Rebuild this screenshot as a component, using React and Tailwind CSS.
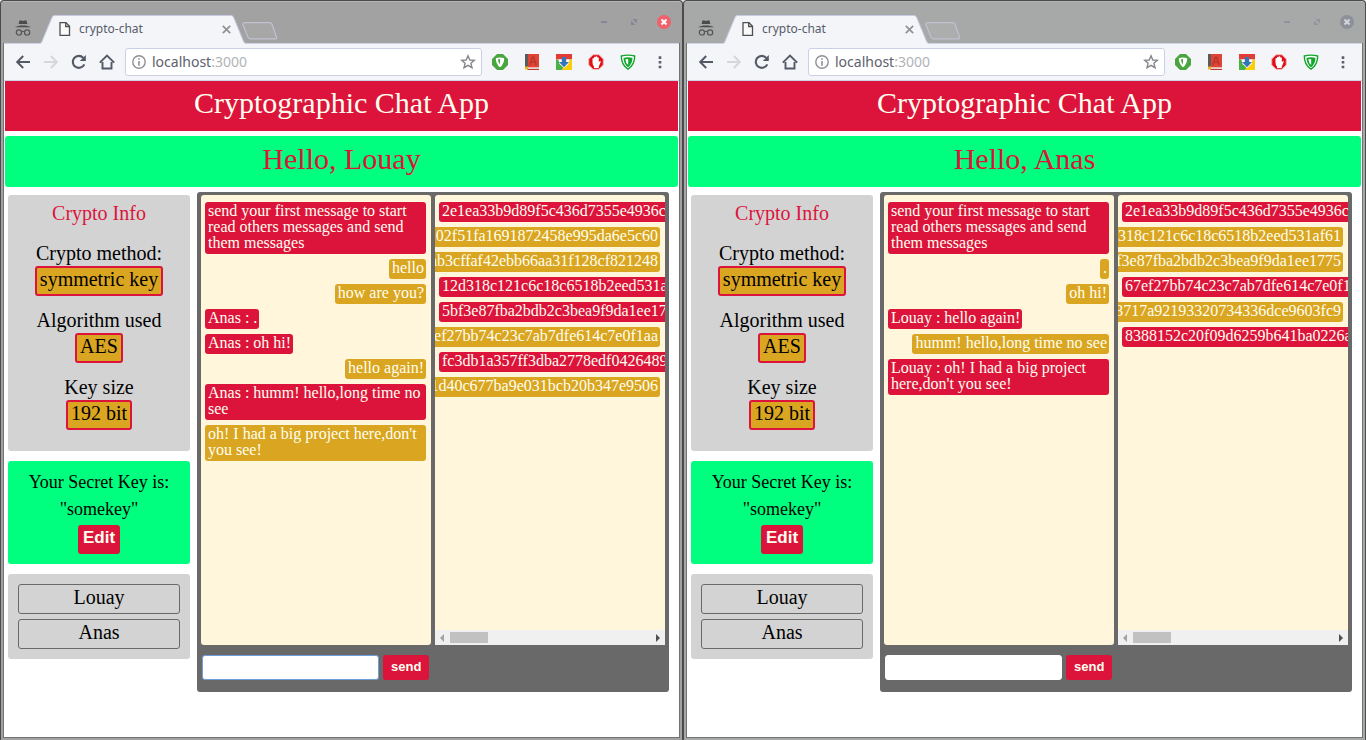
import { useState } from "react";

const INTRO = "send your first message to start read others messages and send them messages";

const WINDOWS = [
  {
    name: "Louay",
    active: true,
    messages: [
      { text: INTRO },
      { text: "hello", own: true },
      { text: "how are you?", own: true },
      { text: "Anas : ." },
      { text: "Anas : oh hi!" },
      { text: "hello again!", own: true },
      { text: "Anas : humm! hello,long time no see" },
      { text: "oh! I had a big project here,don't you see!", own: true },
    ],
    ciphers: [
      { text: "2e1ea33b9d89f5c436d7355e4936c" },
      { text: "02f51fa1691872458e995da6e5c60", own: true },
      { text: "ab3cffaf42ebb66aa31f128cf821248", own: true },
      { text: "12d318c121c6c18c6518b2eed531a" },
      { text: "5bf3e87fba2bdb2c3bea9f9da1ee17" },
      { text: "ef27bb74c23c7ab7dfe614c7e0f1aa", own: true },
      { text: "fc3db1a357ff3dba2778edf0426489" },
      { text: "1d40c677ba9e031bcb20b347e9506", own: true },
    ],
  },
  {
    name: "Anas",
    active: false,
    messages: [
      { text: INTRO },
      { text: ".", own: true },
      { text: "oh hi!", own: true },
      { text: "Louay : hello again!" },
      { text: "humm! hello,long time no see", own: true },
      { text: "Louay : oh! I had a big project here,don't you see!" },
    ],
    ciphers: [
      { text: "2e1ea33b9d89f5c436d7355e4936c" },
      { text: "318c121c6c18c6518b2eed531af61", own: true },
      { text: "f3e87fba2bdb2c3bea9f9da1ee1775", own: true },
      { text: "67ef27bb74c23c7ab7dfe614c7e0f1" },
      { text: "3717a92193320734336dce9603fc9", own: true },
      { text: "8388152c20f09d6259b641ba0226a" },
    ],
  },
];

const CRYPTO_INFO = [
  ["Crypto method:", "symmetric key"],
  ["Algorithm used", "AES"],
  ["Key size", "192 bit"],
];

function IncognitoIcon() {
  return (
    <svg width="18" height="18" viewBox="0 0 18 18" fill="none" className="shrink-0">
      <path d="M5.600 1.200 7.200 1.600 9 1.900 10.800 1.600 12.400 1.200 13.400 5H4.600Z" fill="#4b4b4b" />
      <path d="M1 8.200C3 7 5.500 6.400 9 6.400s6 .6 8 1.800Z" fill="#4b4b4b" />
      <circle cx="4.900" cy="13.400" r="2.600" stroke="#555" strokeWidth="1.200" />
      <circle cx="13.100" cy="13.400" r="2.600" stroke="#555" strokeWidth="1.200" />
      <path d="M7.400 12.800c1-.7 2.200-.7 3.200 0" stroke="#555" strokeWidth="1.200" />
    </svg>
  );
}

function TabStrip({ active }) {
  return (
    <div className="flex h-[42px] items-start border-t border-[#b4b5b5] pl-[11px] pr-[9px]">
      <div className="pt-[17px]">
        <IncognitoIcon />
      </div>
      <div className="relative ml-2 mt-[13px] flex h-7 w-[206px] items-center pl-[19px] pr-[15px]">
        <svg
          className="absolute inset-0"
          width="206"
          height="29"
          viewBox="0 0 206 29"
          fill="none"
        >
          <path d="M0 29 2 27 12 2.500Q12.600.5 14.500.5H191Q193 .5 193.700 2.500L203.500 27 206 29Z" fill="#f4f5f8" />
          <path d="M0 28.500Q1 28.500 2 26L12 2.500Q12.600.5 14.500.5H191Q193 .5 193.700 2.500L203.500 26Q204.500 28.500 206 28.500" stroke="#c6cae2" />
        </svg>
        <svg className="relative" width="12" height="14" viewBox="0 0 12 14" fill="none">
          <path d="M1 .7H7L10.500 4.200V13.300H1Z" fill="#fafafa" stroke="#4f4f4f" strokeWidth="1.300" />
          <path d="M6.700.7V4.500H10.500" stroke="#4f4f4f" strokeWidth="1.300" />
        </svg>
        <span className="relative ml-2 font-['Noto_Sans',sans-serif] text-xs text-[#555c6a]">crypto-chat</span>
        <button type="button" aria-label="Close tab" className="relative ml-auto">
          <svg width="9" height="9" viewBox="0 0 9 9" stroke="#919194" strokeWidth="1.700">
            <path d="M.8.8 8.200 8.200M8.200.8.8 8.200" />
          </svg>
        </button>
      </div>
      <button type="button" aria-label="New tab" className="mt-5 -ml-1">
        <svg width="36" height="18" viewBox="0 0 36 18" fill="none">
          <path
            d="M3 .7H27.500Q29.300.7 30 2.300L34.500 15Q35.200 16.800 33.500 16.800H8.500Q6.700 16.800 6 15.200L.9 2.500Q.3.700 3 .7Z"
            fill="#fff"
            fillOpacity=".06"
            stroke="#c0c2d2"
            strokeWidth="1.200"
          />
        </svg>
      </button>
      <div className="ml-auto flex items-center gap-4 pt-[13px]">
        <button type="button" aria-label="Minimize" className="flex h-[14px] w-[14px] items-center justify-center">
          <svg width="6" height="2" viewBox="0 0 6 2">
            <path d="M0 0H6V2H0Z" fill={active ? "#84879a" : "#90939d"} />
          </svg>
        </button>
        <button type="button" aria-label="Maximize" className="flex h-[14px] w-[14px] items-center justify-center">
          <svg width="6" height="6" viewBox="0 0 6 6" fill={active ? "#84879a" : "#90939d"}>
            <path d="M1.500 0H6V4.500ZM0 1.500 4.500 6H0Z" />
          </svg>
        </button>
        <button type="button" aria-label="Close window">
          <svg width="14" height="14" viewBox="0 0 14 14">
            <circle cx="7" cy="7" r="7" fill={active ? "#f2606b" : "#8d9099"} />
            <path d="M4.500 4.500 9.500 9.500M9.500 4.500 4.500 9.500" stroke={active ? "#fff" : "#d5d6d9"} strokeWidth="2" />
          </svg>
        </button>
      </div>
    </div>
  );
}

function NavIcon({ label, children }) {
  return (
    <button type="button" aria-label={label} className="shrink-0">
      <svg width="16" height="16" viewBox="0 0 16 16" fill="none">
        {children}
      </svg>
    </button>
  );
}

function Toolbar() {
  return (
    <div className="flex h-[38px] items-center border-y border-[#cfd3e8] bg-[#f4f5f8] px-[11px]">
      <div className="flex gap-3">
        <NavIcon label="Back">
          <path d="M15 8H2.500M8.200 2 2.200 8 8.200 14" stroke="#545966" strokeWidth="2" />
        </NavIcon>
        <NavIcon label="Forward">
          <path d="M1 8H13.500M7.800 2 13.800 8 7.800 14" stroke="#d6d7da" strokeWidth="2" />
        </NavIcon>
        <NavIcon label="Reload">
          <path d="M13.300 10.300A6 6 0 1 1 12.300 3.900" stroke="#545966" strokeWidth="2.100" />
          <path d="M14.800 1V7H8.800Z" fill="#545966" />
        </NavIcon>
        <NavIcon label="Home">
          <path d="M.8 8.700 8 1.500 15.200 8.700M3.500 8V14.500H12.500V8" stroke="#545966" strokeWidth="1.900" />
        </NavIcon>
      </div>
      <div className="ml-[10px] flex h-7 min-w-0 flex-1 items-center rounded-[3px] border border-[#ccd0e6] bg-white pl-[6px] pr-[5px]">
        <svg width="14" height="14" viewBox="0 0 14 14" fill="none" className="shrink-0">
          <circle cx="7" cy="7" r="6.200" stroke="#8e9095" strokeWidth="1.400" />
          <path d="M6.200 3.200H7.800V4.800H6.200ZM6.200 6H7.800V10.800H6.200Z" fill="#8e9095" />
        </svg>
        <a href="#address" className="ml-[6px] font-['Noto_Sans',sans-serif] text-sm text-[#5c616c]">
          localhost<span className="text-[#b1b3b8]">:3000</span>
        </a>
        <button type="button" aria-label="Bookmark" className="ml-auto">
          <svg width="16" height="16" viewBox="0 0 16 16" fill="none">
            <path
              d="M8 1.800 9.800 6 14.300 6.300 10.900 9.200 12 13.700 8 11.300 4 13.700 5.100 9.200 1.700 6.300 6.200 6Z"
              stroke="#85878c"
              strokeWidth="1.400"
            />
          </svg>
        </button>
      </div>
      <div className="ml-[10px] flex gap-4">
        <NavIcon label="Ad filter">
          <path d="M5 0H11L16 5V11L11 16H5L0 11V5Z" fill="#4aa541" />
          <path d="M3.800 4.200Q8 2.800 12.200 4.200 12.200 10 8 13.300 3.800 10 3.800 4.200Z" fill="#fff" />
          <path d="M6 5.300Q7 4.900 8 4.900V10.800Q6.200 9 6 5.300Z" fill="#4aa541" />
        </NavIcon>
        <NavIcon label="Dictionary">
          <path d="M1 0H15V13.500H1Z" fill="#df4435" />
          <path d="M1 0H4V14H1Z" fill="#5b5b5b" />
          <path d="M3 13.500H15V15.500H3Z" fill="#e9d3cf" />
          <path d="M3 15H15V16H3Z" fill="#bc3a2d" />
          <path d="M1 12.500H4V16L2.500 14.800 1 16Z" fill="#edb520" />
          <path d="M5.700 11 8.500 3H9.500L12.300 11M7 8.300H11" stroke="#b8382c" strokeWidth="1.500" />
        </NavIcon>
        <NavIcon label="Downloads">
          <path d="M0 0H16V5.500H0Z" fill="#e23c35" />
          <path d="M0 5 8 9 6.500 16H0Z" fill="#4bb147" />
          <path d="M16 5 8 9 6.500 16H16Z" fill="#f9cf0a" />
          <path d="M2.500 5.500H13.500L12.500 10 8 14 3.500 10Z" fill="#fff" />
          <path d="M5.800 3H10.200V8H13L8 13.200 3 8H5.800Z" fill="#3375b8" />
        </NavIcon>
        <NavIcon label="Ad blocker">
          <path d="M5 .7H11L15.300 5V11L11 15.300H5L.7 11V5Z" fill="#df1019" stroke="#f2b9bb" />
          <path
            d="M4.500 8.500V4.500Q5.300 3.700 6 4.500V3.200Q6.800 2.200 7.600 3.200V2.600Q8.400 1.800 9.200 2.600V3.700Q10 2.900 10.800 3.700V8L12 7Q13 7 12.700 8L10.800 12.500V14H6V12.500Q4.500 11 4.500 8.500Z"
            fill="#fff"
          />
        </NavIcon>
        <NavIcon label="VPN shield">
          <path d="M1.300 2Q8 .2 14.700 2 14.700 11 8 15.200 1.300 11 1.300 2Z" fill="#fff" stroke="#12a52c" strokeWidth="1.400" />
          <path d="M3.500 3.900Q8 2.800 12.500 3.900 12.300 10 8 13.200 3.700 10 3.500 3.900Z" fill="#12a52c" />
          <path d="M5.300 5.300Q6.700 4.900 8.200 4.900V11Q5.600 9 5.300 5.300Z" fill="#fff" />
        </NavIcon>
        <NavIcon label="Menu">
          <path d="M6.700 2.300h2.600v2.600H6.700ZM6.700 7h2.600v2.600H6.700ZM6.700 11.700h2.600v2.600H6.700Z" fill="#5a5f6b" />
        </NavIcon>
      </div>
    </div>
  );
}

function Bubble({ own, wide, children }) {
  const side = own ? "self-end bg-[#daa520]" : "self-start bg-[#dc143c]";
  const size = wide ? "min-w-[calc(100%+8px)] whitespace-nowrap" : "";
  const align = own && wide ? "text-right" : "";
  return (
    <li className={`rounded-[3px] pb-[3px] pl-[3px] pr-[2px] pt-px leading-4 text-[#fffff0] ${side} ${size} ${align}`}>
      {children}
    </li>
  );
}

function Scrollbar() {
  return (
    <div className="flex h-[15px] items-center justify-between bg-[#f0f0f0] px-[5px]">
      <div className="flex items-center gap-[6px]">
        <svg width="4" height="8" viewBox="0 0 4 8">
          <path d="M4 0V8L0 4Z" fill="#a3a3a3" />
        </svg>
        <div className="h-[11px] w-[38px] bg-[#c1c1c1]" />
      </div>
      <svg width="4" height="8" viewBox="0 0 4 8">
        <path d="M0 0V8L4 4Z" fill="#505050" />
      </svg>
    </div>
  );
}

function Sidebar() {
  return (
    <aside className="flex w-[182px] shrink-0 flex-col gap-[10px] pt-[3px] text-center text-black">
      <section className="rounded-[3px] bg-[#d3d3d3] pb-2 pt-[7px] text-xl leading-[23px]">
        <h3 className="mb-[17px] text-[#dc143c]">Crypto Info</h3>
        <dl>
          {CRYPTO_INFO.map(([label, value]) => (
            <div key={label} className="mb-[13px] flex flex-col items-center gap-px">
              <dt>{label}</dt>
              <dd className="rounded-[3px] border-2 border-[#dc143c] bg-[#daa520] px-[3px] pb-[3px]">{value}</dd>
            </div>
          ))}
        </dl>
      </section>
      <section className="rounded-[3px] bg-[#00ff7f] pb-[10px] pt-2 text-lg leading-[27px]">
        <p>Your Secret Key is:</p>
        <p>"somekey"</p>
        <button
          type="button"
          className="mx-auto mt-[2px] block h-[29px] rounded-[3px] bg-[#dc143c] px-[5px] pb-1 font-['Liberation_Sans',sans-serif] text-[17px] font-bold leading-[25px] text-[#fffff0]"
        >
          Edit
        </button>
      </section>
      <ul className="flex flex-col gap-[5px] rounded-[3px] bg-[#d3d3d3] p-[10px] text-xl">
        <li className="h-[30px] rounded-[3px] border border-[#696969] leading-[25px]">Louay</li>
        <li className="h-[30px] rounded-[3px] border border-[#696969] leading-[25px]">Anas</li>
      </ul>
    </aside>
  );
}

function ChatPanel({ user }) {
  const [draft, setDraft] = useState("");
  const focusRing = user.active ? "border-[#6f9fdb]" : "border-white";
  return (
    <section className="min-w-0 flex-1 rounded-[3px] bg-[#696969] px-1 pb-3 pt-[3px]">
      <div className="grid h-[450px] grid-cols-2 gap-1">
        <ul className="flex min-w-0 flex-col gap-[5px] rounded-[3px] bg-[#fff6dc] pl-1 pr-[5px] pt-[7px]">
          {user.messages.map((m) => (
            <Bubble key={m.text} own={m.own}>
              {m.text}
            </Bubble>
          ))}
        </ul>
        <div className="flex min-w-0 flex-col overflow-hidden rounded-t-[3px] bg-[#fff6dc]">
          <ul className="flex flex-1 flex-col gap-[5px] pl-1 pr-[5px] pt-[7px]">
            {user.ciphers.map((c) => (
              <Bubble key={c.text} own={c.own} wide>
                {c.text}
              </Bubble>
            ))}
          </ul>
          <Scrollbar />
        </div>
      </div>
      <form className="mt-[10px] flex gap-1 pl-px" onSubmit={(e) => e.preventDefault()}>
        <input
          aria-label="Message"
          value={draft}
          onChange={(e) => setDraft(e.target.value)}
          className={`h-[25px] w-[177px] rounded-[3px] border bg-white px-1 outline-none ${focusRing}`}
        />
        <button
          type="submit"
          className="h-[25px] rounded-[3px] bg-[#dc143c] px-2 pb-[2px] font-['Liberation_Sans',sans-serif] text-[13px] font-bold text-[#fffff0]"
        >
          send
        </button>
      </form>
    </section>
  );
}

function BrowserWindow({ user }) {
  const frame = user.active ? "bg-[#a2a2a2]" : "bg-[#a7a9a8]";
  return (
    <div className={`flex min-w-0 flex-col rounded-t-[4px] border-x border-t border-[#4b4b4b] px-[2px] pb-[2px] ${frame}`}>
      <TabStrip active={user.active} />
      <div className="flex flex-1 flex-col border-x border-b border-[#737373]">
        <Toolbar />
        <main className="flex-1 bg-white px-px font-['Liberation_Serif',serif]">
          <h1 className="h-[50px] bg-[#dc143c] pt-[5px] text-center text-3xl leading-[34px] text-[#fffff0]">
            Cryptographic Chat App
          </h1>
          <h2 className="mt-[5px] h-[51px] rounded-[3px] bg-[#00ff7f] pt-[6px] text-center text-3xl leading-[34px] text-[#dc143c]">
            Hello, {user.name}
          </h2>
          <div className="mt-[5px] flex items-start gap-[7px] pl-[3px] pr-[9px]">
            <Sidebar />
            <ChatPanel user={user} />
          </div>
        </main>
      </div>
    </div>
  );
}

export default function App() {
  return (
    <div className="grid min-h-screen grid-cols-2 bg-[#e8e8e8]">
      {WINDOWS.map((user) => (
        <BrowserWindow key={user.name} user={user} />
      ))}
    </div>
  );
}
